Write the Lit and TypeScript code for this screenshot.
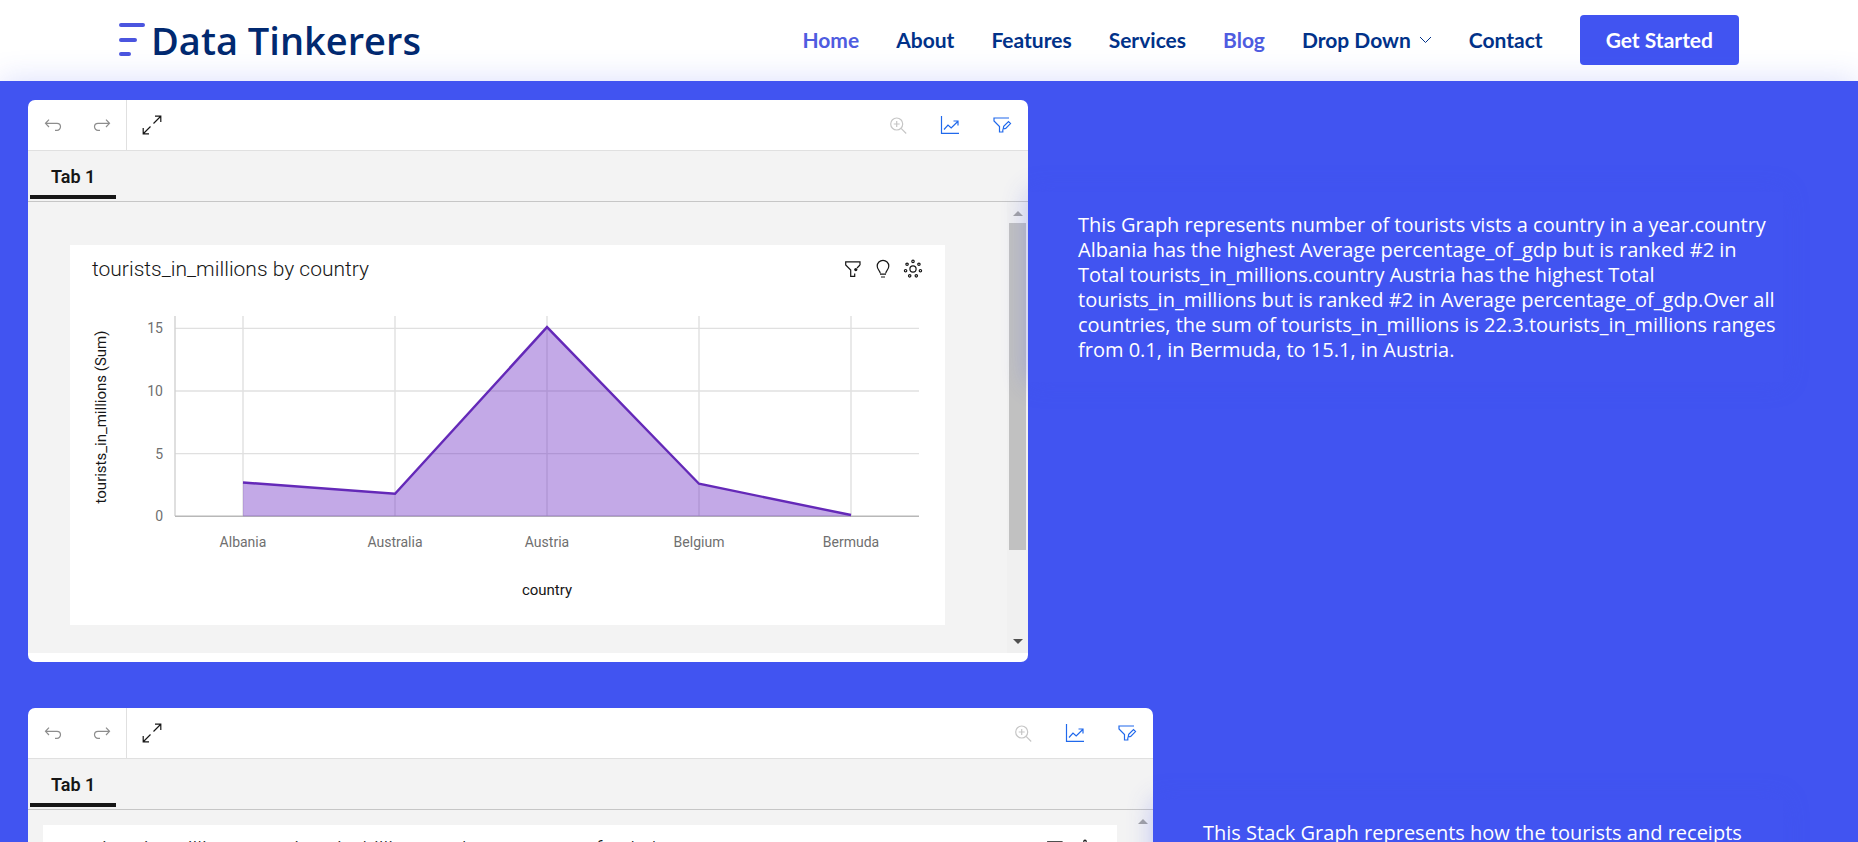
import { LitElement, html, svg, css, nothing } from "lit";
import { customElement, property } from "lit/decorators.js";

const COUNTRIES = [
  { name: "Albania", value: 2.7 },
  { name: "Australia", value: 1.8 },
  { name: "Austria", value: 15.1 },
  { name: "Belgium", value: 2.6 },
  { name: "Bermuda", value: 0.1 },
];

const dots = Array.from({ length: 7 }, (_, i) => {
  const a = ((i * 360) / 7 - 90) * (Math.PI / 180);
  return svg`<circle cx=${10 + 7.6 * Math.cos(a)} cy=${10 + 7.6 * Math.sin(a)} r="1.2"></circle>`;
});

const ICONS: Record<string, unknown> = {
  undo: svg`<path d="M6 4.7 2.5 8.3 6 12M2.5 8.3H14a3.5 3.5 0 0 1 0 7h-2"></path>`,
  redo: svg`<path d="M14 4.7l3.5 3.6L14 12M17.5 8.3H6a3.5 3.5 0 0 0 0 7h2"></path>`,
  expand: svg`<path d="M11.5 8.5 18.5 1.5M13 1.2h5.8V7M8.5 11.5 1.5 18.5M1.2 13v5.8H7"></path>`,
  zoom: svg`<circle cx="8.7" cy="9" r="6"></circle><path d="M5.7 9h6M8.7 6v6M13.1 13.4 18.2 18.5"></path>`,
  chart: svg`<path d="M1.5 1v17.3H19M4 14.5 8 10l3.2 3L18 6.3M13.5 6H18v4.5"></path>`,
  filterEdit: svg`<path d="M17 3H2v3l5.5 5.5V17h3.3v-2.5"></path><path d="M11.2 14l.5-2.6 4.8-4.8 2 2-4.8 4.8z"></path>`,
  filter: svg`<path d="M17 6V2.8H2.7V6l5 5v6.3h4V14.5M17 6l-3 3"></path><circle class="fill" cx="12.8" cy="10.6" r="1.6"></circle>`,
  bulb: svg`<path d="M7.2 14.3c0-2.6-3-3.4-3-7.2a5.8 5.8 0 0 1 11.6 0c0 3.8-3 4.6-3 7.2M7 15.2h6M8 18h4"></path>`,
  gear: svg`<circle cx="10" cy="10" r="3.1"></circle>${dots}`,
};

const icon = (name: string) => html`<svg viewBox="0 0 20 20" aria-hidden="true">${ICONS[name]}</svg>`;

@customElement("area-chart")
export class AreaChart extends LitElement {
  static styles = css`
    :host { display: block; }
    svg { display: block; width: 100%; height: auto; font-family: "Roboto", sans-serif; }
    .grid { stroke: #e0e0e0; stroke-width: 1.4; }
    .axis { stroke: #b8b8b8; stroke-width: 1.4; }
    .axis-y { stroke: #d2d2d2; stroke-width: 1.4; }
    .area { fill: #6929c4; fill-opacity: 0.4; }
    .line { fill: none; stroke: #6429b8; stroke-width: 2.4; }
    .tick { fill: #6f6f6f; font-size: 14px; }
    .name { fill: #161616; font-size: 15px; }
    .mid { text-anchor: middle; }
    .end { text-anchor: end; }
  `;

  render() {
    const x = (i: number) => 173 + i * 152;
    const y = (v: number) => 223.3 - v * 12.53;
    const pts = COUNTRIES.map((c, i) => `${x(i)},${y(c.value)}`).join(" ");
    return html`<svg viewBox="0 0 875 332" role="img" aria-label="tourists_in_millions by country">
      ${COUNTRIES.map((_, i) => svg`<line class="grid" x1=${x(i)} x2=${x(i)} y1="23" y2="223"></line>`)}
      ${[5, 10, 15].map((v) => svg`<line class="grid" x1="105" x2="849" y1=${y(v)} y2=${y(v)}></line>`)}
      <line class="axis-y" x1="105" x2="105" y1="23" y2="223"></line>
      <line class="axis" x1="105" x2="849" y1="223.3" y2="223.3"></line>
      <polygon class="area" points="${x(0)},${y(0)} ${pts} ${x(4)},${y(0)}"></polygon>
      <polyline class="line" points=${pts}></polyline>
      ${[0, 5, 10, 15].map((v) => svg`<text class="tick end" x="93" y=${y(v) + 5}>${v}</text>`)}
      ${COUNTRIES.map((c, i) => svg`<text class="tick mid" x=${x(i)} y="254">${c.name}</text>`)}
      <text class="name mid" x="477" y="302">country</text>
      <text class="name mid" transform="translate(36 124) rotate(-90)">tourists_in_millions (Sum)</text>
    </svg>`;
  }
}

@customElement("dashboard-frame")
export class DashboardFrame extends LitElement {
  static styles = css`
    :host {
      display: block;
      box-sizing: border-box;
      padding-bottom: 9px;
      background: #fff;
      border-radius: 7px;
      overflow: hidden;
      font-family: "Roboto", sans-serif;
      color: #161616;
    }
    button {
      display: flex;
      align-items: center;
      justify-content: center;
      border: 0;
      padding: 0;
      background: none;
      color: inherit;
      font: inherit;
      cursor: pointer;
    }
    svg { width: 20px; height: 20px; fill: none; stroke: currentColor; stroke-width: 1.2; }
    .fill { fill: currentColor; stroke: none; }
    .toolbar { display: flex; height: 50px; border-bottom: 1px solid #e0e0e0; }
    .toolbar button { width: 50px; }
    .history { display: flex; width: 98px; border-right: 1px solid #e0e0e0; color: #8d8d8d; }
    .actions { display: flex; margin-left: auto; color: #2069ec; }
    .actions button { width: 52px; }
    .actions .off { color: #c6c6c6; }
    .tabs { display: flex; padding: 0 2px 2px; height: 48px; background: #f3f3f3; border-bottom: 1px solid #c6c6c6; }
    .tab { padding: 6px 21px 0; border-bottom: 4px solid #161616; font-size: 18px; font-weight: 600; }
    .body { display: flex; height: 451px; background: #f3f3f3; }
    .canvas { flex: 1; min-width: 0; padding: 43px 62px 28px 42px; }
    .canvas.tight { padding: 15px; }
    .card { height: 100%; background: #fff; }
    .head { display: flex; align-items: center; height: 48px; padding: 0 22px; }
    h2 { flex: 1; margin: 0; font-size: 21px; font-weight: 300; line-height: 28px; white-space: nowrap; }
    .tools { display: flex; gap: 10px; }
    .scroll {
      display: flex;
      flex-direction: column;
      align-items: center;
      justify-content: space-between;
      width: 21px;
      padding: 9px 0;
      box-sizing: border-box;
      background: #f0f0f0;
    }
    .thumb { width: 17px; height: 327px; margin: 7px 0 auto; background: #c1c1c1; }
    .tight + .scroll { background: #f3f3f3; }
    .tight + .scroll .thumb { margin-top: 20px; }
    .arrow { border: 5px solid transparent; border-top-width: 0; border-bottom-color: #a3a3a3; }
    .arrow.down { border-top: 5px solid #505050; border-bottom-width: 0; }
  `;

  @property() heading = "";
  @property({ type: Boolean }) tight = false;
  @property({ type: Boolean }) chart = false;

  render() {
    return html`
      <div class="toolbar">
        <div class="history">
          <button aria-label="Undo">${icon("undo")}</button>
          <button aria-label="Redo">${icon("redo")}</button>
        </div>
        <button aria-label="Full screen">${icon("expand")}</button>
        <div class="actions">
          <button class="off" aria-label="Zoom in">${icon("zoom")}</button>
          <button aria-label="Chart">${icon("chart")}</button>
          <button aria-label="Edit filters">${icon("filterEdit")}</button>
        </div>
      </div>
      <div class="tabs" role="tablist">
        <button class="tab" role="tab" aria-selected="true">Tab 1</button>
      </div>
      <div class="body">
        <div class="canvas ${this.tight ? "tight" : ""}">
          <div class="card">
            <div class="head">
              <h2>${this.heading}</h2>
              <div class="tools">
                <button aria-label="Filter">${icon("filter")}</button>
                ${this.chart ? html`<button aria-label="Insights">${icon("bulb")}</button>` : nothing}
                <button aria-label="Settings">${icon("gear")}</button>
              </div>
            </div>
            ${this.chart ? html`<area-chart></area-chart>` : nothing}
          </div>
        </div>
        <div class="scroll" aria-hidden="true">
          <div class="arrow"></div>
          <div class="thumb"></div>
          <div class="arrow down"></div>
        </div>
      </div>
    `;
  }
}

@customElement("app-root")
export class AppRoot extends LitElement {
  static styles = css`
    :host {
      display: flex;
      flex-direction: column;
      height: 100vh;
      overflow: hidden;
      background: #fff;
      font-family: "Open Sans", sans-serif;
    }
    header {
      flex: none;
      display: flex;
      align-items: center;
      justify-content: space-between;
      box-sizing: border-box;
      height: 81px;
      padding-bottom: 2px;
      width: 100%;
      max-width: 1620px;
      margin: 0 auto;
      color: #012970;
    }
    a { color: inherit; text-decoration: none; }
    .brand { display: flex; align-items: center; gap: 5px; font-size: 38px; font-weight: 600; line-height: 40px; }
    .brand svg { width: 27px; height: 34px; stroke: #4b55df; stroke-width: 4; stroke-linecap: round; }
    nav {
      display: flex;
      align-items: center;
      gap: 37px;
      font-family: "Lato", sans-serif;
      font-size: 21px;
      font-weight: 700;
      line-height: 26px;
      color: #013289;
    }
    .on { color: #4f5ce0; }
    .drop { display: flex; align-items: center; gap: 8px; }
    .drop svg { width: 13px; height: 8px; fill: none; stroke: currentColor; }
    .cta {
      padding: 12px 26px;
      border: 0;
      border-radius: 4px;
      background: #4154f1;
      color: #fff;
      font: inherit;
      cursor: pointer;
    }
    main {
      flex: 1 0 auto;
      padding: 19px 28px;
      background: #4154f1;
      box-shadow: 0 0 30px rgba(65, 84, 241, 0.2);
    }
    .row { display: flex; align-items: flex-start; margin-bottom: 46px; }
    .wide { flex: 0 1 1000px; }
    .wider { flex: 0 1 1125px; }
    .copy {
      flex: 1;
      box-sizing: border-box;
      min-height: 190px;
      margin: 92px 47px 0 0;
      padding: 20px 0 20px 50px;
      box-shadow: 0 0 24px rgba(65, 84, 241, 0.3);
      color: #fff;
      font-size: 20px;
      line-height: 25px;
    }
  `;

  render() {
    return html`
      <header>
        <a class="brand" href="#">
          <svg viewBox="0 0 27 34" aria-hidden="true"><path d="M2 2h22M2 17h14M2 31h8"></path></svg>
          <span>Data Tinkerers</span>
        </a>
        <nav>
          <a class="on" href="#">Home</a>
          <a href="#">About</a>
          <a href="#">Features</a>
          <a href="#">Services</a>
          <a class="on" href="#">Blog</a>
          <a class="drop" href="#">Drop Down
            <svg viewBox="0 0 13 8" aria-hidden="true"><path d="M1 1l5.5 5.5L12 1"></path></svg>
          </a>
          <a href="#">Contact</a>
          <button class="cta">Get Started</button>
        </nav>
      </header>
      <main>
        <section class="row">
          <dashboard-frame class="wide" heading="tourists_in_millions by country" chart></dashboard-frame>
          <div class="copy">
            This Graph represents number of tourists vists a country in a year.country Albania has the highest
            Average percentage_of_gdp but is ranked #2 in Total tourists_in_millions.country Austria has the
            highest Total tourists_in_millions but is ranked #2 in Average percentage_of_gdp.Over all countries,
            the sum of tourists_in_millions is 22.3.tourists_in_millions ranges from 0.1, in Bermuda, to 15.1,
            in Austria.
          </div>
        </section>
        <section class="row">
          <dashboard-frame
            class="wider"
            heading="tourists_in_millions , receipts_in_billions and percentage_of_gdp by country"
            tight
          ></dashboard-frame>
          <div class="copy">This Stack Graph represents how the tourists and receipts</div>
        </section>
      </main>
    `;
  }
}
